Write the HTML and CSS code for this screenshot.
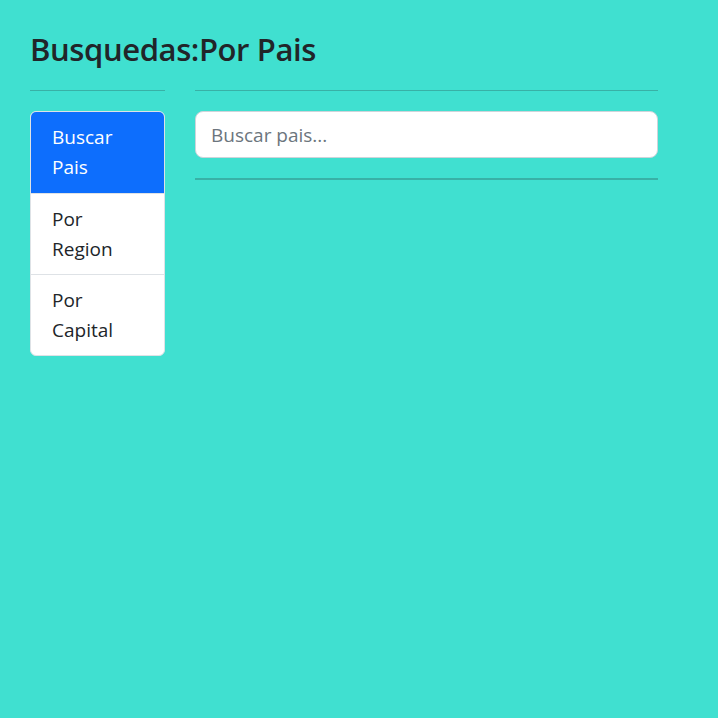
FILE: index.html
```html
<!DOCTYPE html>
<html lang="es">
<head>
<meta charset="utf-8">
<title>Busquedas</title>
<link rel="stylesheet" href="styles.css">
</head>
<body>
<div class="page">
  <h2 class="title">Busquedas:Por Pais</h2>
  <div class="row">
    <div class="side">
      <hr class="rule">
      <ul class="list">
        <li class="item active">Buscar Pais</li>
        <li class="item">Por Region</li>
        <li class="item">Por Capital</li>
      </ul>
    </div>
    <div class="main">
      <hr class="rule">
      <input class="search" type="text" placeholder="Buscar pais...">
      <hr class="rule thick">
    </div>
  </div>
</div>
</body>
</html>
```

FILE: styles.css
```css
* { box-sizing: border-box; }
html, body { margin: 0; padding: 0; }
body {
  background: #40E0D0;
  color: #212529;
  font-family: "Open Sans", "Noto Sans", "Liberation Sans", sans-serif;
  font-size: 16px;
  line-height: 1.5;
  min-height: 718px;
}
.page {
  padding: 31px 30px 0 30px;
}
.title {
  margin: 0 0 8px 0;
  font-size: 31px;
  font-weight: 600;
  line-height: 1.2;
  letter-spacing: -0.4px;
}
.row {
  display: flex;
  gap: 30px;
}
.side { width: 135px; flex: none; }
.main { width: 463px; flex: none; }
.rule {
  margin: 14px 0 20px 0;
  border: 0;
  border-top: 1px solid #38B1A6;
  height: 0;
}
.rule.thick {
  border-top-width: 2px;
  margin-top: 20px;
}
.list {
  list-style: none;
  margin: 0;
  padding: 0;
  background: #fff;
  border: 1px solid #dee2e6;
  border-radius: 6px;
  overflow: hidden;
}
.item {
  padding: 10px 20px 10px 21px;
  font-size: 19px;
  line-height: 30px;
  border-top: 1px solid #dee2e6;
}
.item:first-child { border-top: 0; }
.item.active {
  background: #0D6EFD;
  color: #fff;
  margin: -1px -1px 0 -1px;
  padding: 11px 21px 11px 22px;
}
.search {
  display: block;
  width: 100%;
  height: 47px;
  padding: 8px 15px;
  font-family: inherit;
  font-size: 19px;
  color: #212529;
  background: #fff;
  border: 1px solid #ced4da;
  border-radius: 8px;
  outline: none;
}
.search::placeholder { color: #6c757d; }
```
